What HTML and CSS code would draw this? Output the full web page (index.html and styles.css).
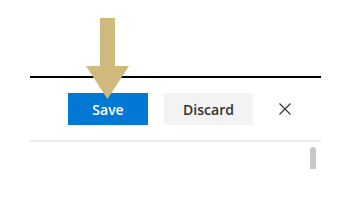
FILE: index.html
```html
<!DOCTYPE html>
<html>
<head>
<meta charset="utf-8">
<link rel="stylesheet" href="styles.css">
</head>
<body>
<div class="panel">
  <div class="header"></div>
  <div class="actions">
    <button class="btn btn-primary">Save</button>
    <button class="btn btn-default">Discard</button>
    <button class="btn-close" aria-label="Close">
      <svg width="12" height="12" viewBox="0 0 12 12"><path d="M0.5 0.5L11.5 11.5M11.5 0.5L0.5 11.5" stroke="#323130" stroke-width="1.1" fill="none"/></svg>
    </button>
  </div>
  <div class="body"></div>
  <div class="scrollbar"></div>
  <svg class="arrow" width="44" height="82" viewBox="0 0 44 82"><path d="M14 0H29V48H43L21.5 81L0 48H14Z" fill="#cfb97c"/></svg>
</div>
</body>
</html>
```
FILE: styles.css
```css
html, body { margin: 0; padding: 0; background: #fff; }
body { width: 346px; height: 205px; overflow: hidden; font-family: "Open Sans", "Noto Sans", sans-serif; }
.panel { position: relative; width: 291px; margin-left: 30px; }
.header { height: 76px; border-bottom: 2px solid #000; }
.actions { display: flex; align-items: center; padding: 15px 0 15px 38px; border-bottom: 2px solid #ebebeb; }
.btn { height: 32px; border: none; font-family: "Open Sans", "Noto Sans", sans-serif; font-size: 14px; font-weight: 600; padding: 0; }
.btn-primary { width: 80px; background: #0078d4; color: #fff; }
.btn-default { width: 89px; margin-left: 16px; background: #f3f3f3; color: #323130; }
.btn-close { margin-left: 26px; width: 12px; height: 12px; padding: 0; border: none; background: none; display: flex; }
.scrollbar { position: absolute; left: 280px; top: 147px; width: 6px; height: 22px; background: #c8c8c8; border-radius: 3px 3px 0 0; }
.arrow { position: absolute; left: 56px; top: 18px; }
```
